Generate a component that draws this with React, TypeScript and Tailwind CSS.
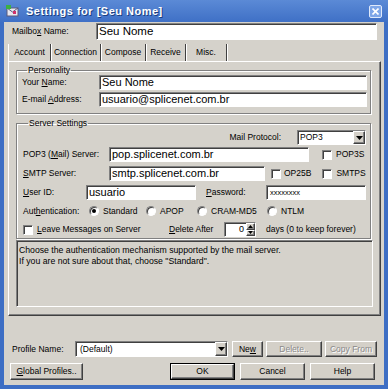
import React from "react";

const F = "font-['Liberation_Sans',Arial,sans-serif]";
const sunken =
  "bg-white border border-t-[#808080] border-l-[#808080] border-b-white border-r-white shadow-[inset_1px_1px_0_#404040]";
const raised =
  "bg-[#d4d0c8] border border-t-white border-l-white border-b-[#404040] border-r-[#404040] shadow-[inset_-1px_-1px_0_#808080]";
const etched = "border border-[#808080] shadow-[inset_1px_1px_0_#fff,1px_1px_0_#fff]";

function Check() {
  return <div className={`w-[10px] h-[10px] shrink-0 ${sunken}`} />;
}

function Radio({ checked }: { checked?: boolean }) {
  return (
    <div className="w-[10px] h-[10px] shrink-0 rounded-full bg-white border border-t-[#808080] border-l-[#808080] border-b-white border-r-white shadow-[inset_1px_1px_0_#404040] flex items-center justify-center">
      {checked && <div className="w-[4px] h-[4px] rounded-full bg-black" />}
    </div>
  );
}

function DropBtn() {
  return (
    <div className={`w-[12px] h-full shrink-0 flex items-center justify-center ${raised}`}>
      <svg width="7" height="4" viewBox="0 0 7 4">
        <path d="M0 0h7L3.5 4z" fill="#000" />
      </svg>
    </div>
  );
}

function Field({ text, className = "", size = "text-[11px]" }: { text: string; className?: string; size?: string }) {
  return (
    <div className={`${sunken} ${className} flex items-center pl-[2px] ${size} leading-none text-black overflow-hidden whitespace-nowrap`}>
      {text}
    </div>
  );
}

function Btn({ children, className = "", disabled }: { children: React.ReactNode; className?: string; disabled?: boolean }) {
  return (
    <div
      className={`${raised} ${className} flex items-center justify-center text-[8.5px] leading-none ${
        disabled ? "text-[#8a8a8a] [text-shadow:1px_1px_0_#fff]" : "text-black"
      }`}
    >
      {children}
    </div>
  );
}

export default function App() {
  return (
    <div className={`w-[388px] h-[389px] flex flex-col bg-[#3d6ec4] ${F} text-[8.5px] leading-none text-black select-none`}>
      {/* title bar */}
      <div className="h-[22px] shrink-0 flex items-center bg-linear-to-b from-[#5b8ad6] to-[#3f70c6]">
        <svg width="13" height="12" viewBox="0 0 13 12" className="ml-[6px] shrink-0">
          <rect x="1" y="3" width="11" height="8" fill="#e8e8f0" stroke="#5a5a7a" strokeWidth="1" />
          <path d="M1 3l5.5 4L12 3" fill="none" stroke="#5a5a7a" strokeWidth="1" />
          <rect x="0" y="0" width="5" height="4" fill="#3cb043" />
          <rect x="7" y="6" width="3" height="3" fill="#d0306a" />
        </svg>
        <div className="ml-[7px] text-white font-bold text-[11px] tracking-[0.5px] [text-shadow:1px_1px_0_#1d3f80]">
          Settings for [Seu Nome]
        </div>
        <div className="ml-auto mr-[6px] w-[13px] h-[13px] rounded-[2px] bg-[#7ea6e8] border border-[#dfe9fb] flex items-center justify-center">
          <svg width="7" height="7" viewBox="0 0 7 7">
            <path d="M0.5 0.5l6 6M6.5 0.5l-6 6" stroke="#fff" strokeWidth="1.6" />
          </svg>
        </div>
      </div>

      {/* body */}
      <div className="flex-1 mx-[4px] mb-[4px] bg-[#d5d2cb] flex flex-col">
        {/* Mailbox row */}
        <div className="mt-[1px] h-[17px] flex items-center pl-[8px] pr-[7px]">
          <div className="w-[84px] shrink-0">
            Mailbo<u>x</u> Name:
          </div>
          <Field text="Seu Nome" className="flex-1 h-[17px]" size="text-[11.5px]" />
        </div>

        {/* Tabs */}
        <div className="mt-[4px] ml-[4px] h-[17px] flex items-stretch">
          {[
            ["Account", 43],
            ["Connection", 50],
            ["Compose", 45],
            ["Receive", 40],
            ["Misc.", 41],
          ].map(([t, w], i) => (
            <div
              key={t as string}
              style={{ width: w as number }}
              className={`flex items-center justify-center border-r border-r-[#404040] shadow-[1px_0_0_#fff] ${
                i === 0 ? "border-l border-l-white" : ""
              }`}
            >
              {t}
            </div>
          ))}
        </div>

        {/* Tab panel */}
        <div className="ml-[4px] mr-[3px] h-[255px] shrink-0 border border-t-white border-l-white border-r-[#404040] border-b-[#404040] shadow-[inset_-1px_-1px_0_#808080] flex flex-col">
          {/* Personality */}
          <fieldset className={`mt-[3px] ml-[7px] w-[355px] ${etched} pl-[5px] pr-[3px] pb-[6px]`}>
            <legend className="ml-[5px] px-[1px] leading-[10px]">Personality</legend>
            <div className="h-[15px] flex items-center">
              <div className="w-[77px] shrink-0">
                Your <u>N</u>ame:
              </div>
              <Field text="Seu Nome" className="flex-1 h-[15px]" />
            </div>
            <div className="mt-[2px] h-[15px] flex items-center">
              <div className="w-[77px] shrink-0">
                E-mail <u>A</u>ddress:
              </div>
              <Field text="usuario@splicenet.com.br" className="flex-1 h-[15px]" />
            </div>
          </fieldset>

          {/* Server Settings */}
          <fieldset className={`mt-[4px] ml-[7px] w-[355px] ${etched} pl-[6px] pr-[4px] pb-[1px]`}>
            <legend className="ml-[5px] px-[1px] leading-[10px]">Server Settings</legend>
            <div className="mt-[2px] h-[15px] flex items-center">
              <div className="ml-auto">Mail Protocol:</div>
              <div className={`ml-[16px] w-[69px] h-[15px] flex ${sunken}`}>
                <div className="flex-1 flex items-center pl-[2px] text-[8.5px]">POP3</div>
                <DropBtn />
              </div>
            </div>
            <div className="mt-[2px] h-[15px] flex items-center">
              <div className="w-[86px] shrink-0">
                POP3 (<u>M</u>ail) Server:
              </div>
              <Field text="pop.splicenet.com.br" className="w-[200px] h-[15px]" />
              <div className="ml-[13px] flex items-center gap-[4px]">
                <Check />
                <span>POP3S</span>
              </div>
            </div>
            <div className="mt-[4px] h-[15px] flex items-center">
              <div className="w-[86px] shrink-0">
                <u>S</u>MTP Server:
              </div>
              <Field text="smtp.splicenet.com.br" className="w-[156px] h-[15px]" />
              <div className="ml-[6px] flex items-center gap-[3px]">
                <Check />
                <span>OP25B</span>
              </div>
              <div className="ml-[11px] flex items-center gap-[4px]">
                <Check />
                <span>SMTPS</span>
              </div>
            </div>
            <div className="mt-[4px] h-[15px] flex items-center">
              <div className="w-[63px] shrink-0">
                <u>U</u>ser ID:
              </div>
              <Field text="usuario" className="w-[110px] h-[15px]" />
              <div className="ml-[10px] w-[60px] shrink-0">
                <u>P</u>assword:
              </div>
              <Field text="xxxxxxxx" className="flex-1 h-[15px] pl-[3px]" size="text-[7.5px]" />
            </div>
            <div className="mt-[5px] h-[12px] flex items-center">
              <div className="w-[66px] shrink-0">
                Aut<u>h</u>entication:
              </div>
              <div className="flex items-center gap-[4px] w-[57px]">
                <Radio checked />
                <span>Standard</span>
              </div>
              <div className="flex items-center gap-[4px] w-[51px]">
                <Radio />
                <span>APOP</span>
              </div>
              <div className="flex items-center gap-[4px] w-[70px]">
                <Radio />
                <span>CRAM-MD5</span>
              </div>
              <div className="flex items-center gap-[4px]">
                <Radio />
                <span>NTLM</span>
              </div>
            </div>
            <div className="mt-[5px] h-[15px] flex items-center">
              <div className="flex items-center gap-[4px] w-[146px] shrink-0">
                <Check />
                <span>
                  <u>L</u>eave Messages on Server
                </span>
              </div>
              <div className="w-[55px] shrink-0">
                <u>D</u>elete After
              </div>
              <div className={`w-[32px] h-[15px] flex ${sunken}`}>
                <div className="flex-1 flex items-center justify-end pr-[2px] text-[9px]">0</div>
                <div className="w-[9px] flex flex-col">
                  <div className={`flex-1 flex items-center justify-center ${raised}`}>
                    <svg width="5" height="3" viewBox="0 0 5 3">
                      <path d="M0 3h5L2.5 0z" fill="#000" />
                    </svg>
                  </div>
                  <div className={`flex-1 flex items-center justify-center ${raised}`}>
                    <svg width="5" height="3" viewBox="0 0 5 3">
                      <path d="M0 0h5L2.5 3z" fill="#000" />
                    </svg>
                  </div>
                </div>
              </div>
              <div className="ml-[10px]">days (0 to keep forever)</div>
            </div>
          </fieldset>

          {/* Description */}
          <div className="mt-[1px] ml-[7px] w-[357px] h-[67px] border border-t-[#808080] border-l-[#808080] border-b-white border-r-white shadow-[inset_1px_1px_0_#404040] pl-[2px] pt-[4px] leading-[11px] text-[8.7px]">
            <div>Choose the authentication mechanism supported by the mail server.</div>
            <div>If you are not sure about that, choose "Standard".</div>
          </div>
        </div>

        {/* Profile row */}
        <div className="mt-[25px] h-[16px] flex items-center pl-[8px]">
          <div className="w-[63px] shrink-0">Profile Name:</div>
          <div className={`w-[153px] h-[16px] flex ${sunken}`}>
            <div className="flex-1 flex items-center pl-[4px]">(Default)</div>
            <DropBtn />
          </div>
          <Btn className="ml-[4px] w-[31px] h-[16px]">
            <span>
              Ne<u>w</u>
            </span>
          </Btn>
          <Btn className="ml-[3px] w-[56px] h-[16px]" disabled>
            Delete..
          </Btn>
          <Btn className="ml-[3px] w-[52px] h-[16px]" disabled>
            Copy From
          </Btn>
        </div>

        {/* Bottom buttons */}
        <div className="mt-[6px] h-[17px] flex items-center pl-[6px]">
          <Btn className="w-[73px] h-[17px]">
            <span>
              <u>G</u>lobal Profiles..
            </span>
          </Btn>
          <div className="ml-[87px] w-[65px] h-[17px] border border-black">
            <Btn className="w-full h-full">OK</Btn>
          </div>
          <Btn className="ml-[5px] w-[65px] h-[17px]">Cancel</Btn>
          <Btn className="ml-[5px] w-[65px] h-[17px]">Help</Btn>
        </div>
      </div>
    </div>
  );
}
